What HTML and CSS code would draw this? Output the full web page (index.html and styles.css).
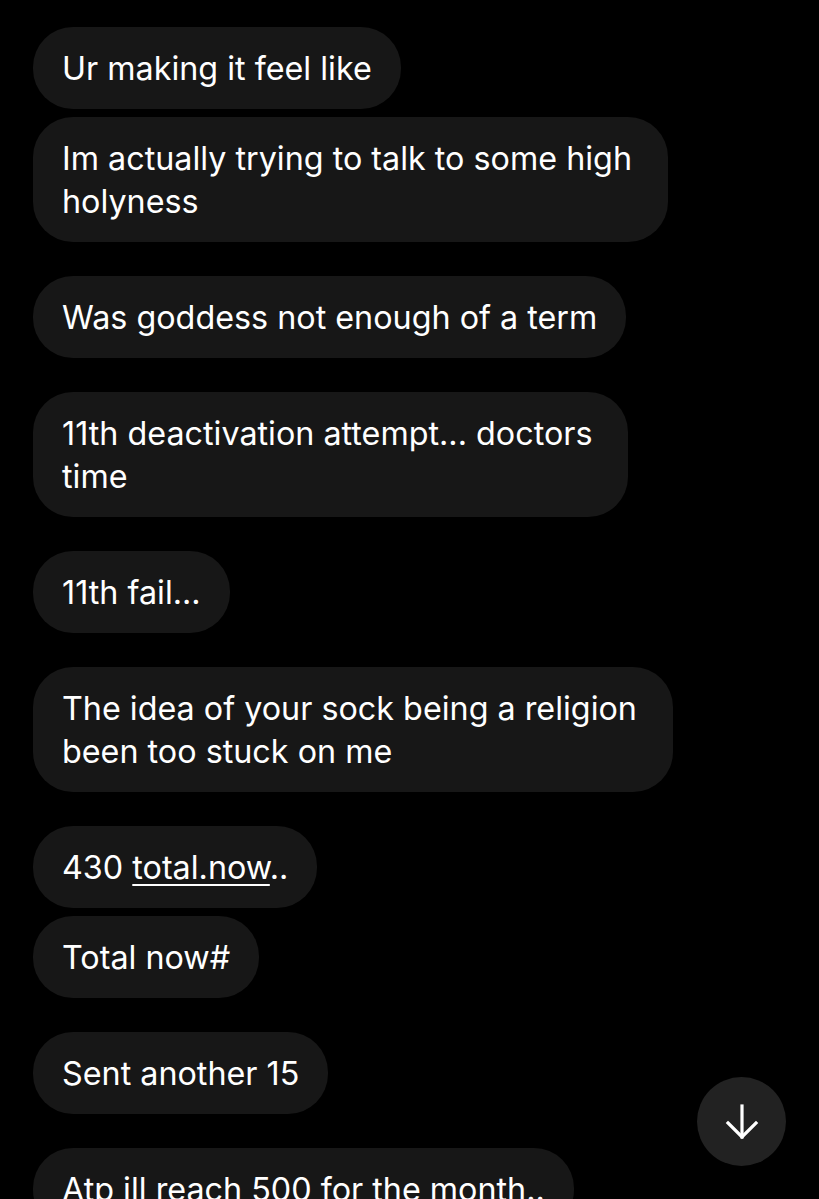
FILE: index.html
```html
<!DOCTYPE html>
<html lang="en">
<head>
    <meta charset="UTF-8">
    <meta name="viewport" content="width=device-width, initial-scale=1.0">
    <title>Messages</title>
    <link rel="stylesheet" href="styles.css">
</head>
<body>
    <div class="chat">
        <div class="group">
            <div class="bubble">Ur making it feel like</div>
            <div class="bubble multi">Im actually trying to talk to some high<br>holyness</div>
        </div>
        <div class="group">
            <div class="bubble">Was goddess not enough of a term</div>
        </div>
        <div class="group">
            <div class="bubble multi">11th deactivation attempt... doctors<br>time</div>
        </div>
        <div class="group">
            <div class="bubble">11th fail...</div>
        </div>
        <div class="group">
            <div class="bubble multi">The idea of your sock being a religion<br>been too stuck on me</div>
        </div>
        <div class="group">
            <div class="bubble">430 <span class="link">total.now</span>..</div>
            <div class="bubble">Total now#</div>
        </div>
        <div class="group">
            <div class="bubble">Sent another 15</div>
        </div>
        <div class="group">
            <div class="bubble">Atp ill reach 500 for the month..</div>
        </div>
    </div>
    <button class="scroll-down" aria-label="Scroll to bottom">
        <svg width="40" height="40" viewBox="0 0 40 40" fill="none" stroke="#fff" stroke-width="3.2" stroke-linecap="square">
            <path d="M20 4 V35"/>
            <path d="M6 21 L20 35 L34 21"/>
        </svg>
    </button>
</body>
</html>
```

FILE: styles.css
```css
html, body {
    margin: 0;
    background: #000;
}
body {
    font-family: Inter, "Noto Sans", sans-serif;
    color: #fff;
    overflow: hidden;
    height: 1199px;
}
.chat {
    display: flex;
    flex-direction: column;
    gap: 34px;
    padding: 27px 0 0 33px;
}
.group {
    display: flex;
    flex-direction: column;
    align-items: flex-start;
    gap: 8px;
}
.bubble {
    background: #171717;
    border-radius: 40px;
    padding: 20px 29px 19px;
    font-size: 32.3px;
    line-height: 43px;
    white-space: nowrap;
}
.bubble.multi {
    padding-right: 36px;
}
.link {
    text-decoration: underline;
    text-underline-offset: 5px;
    text-decoration-thickness: 2px;
}
.scroll-down {
    position: absolute;
    left: 697px;
    top: 1077px;
    width: 89px;
    height: 89px;
    border-radius: 50%;
    border: none;
    background: #222;
    display: flex;
    align-items: center;
    justify-content: center;
    padding: 0;
}
```
